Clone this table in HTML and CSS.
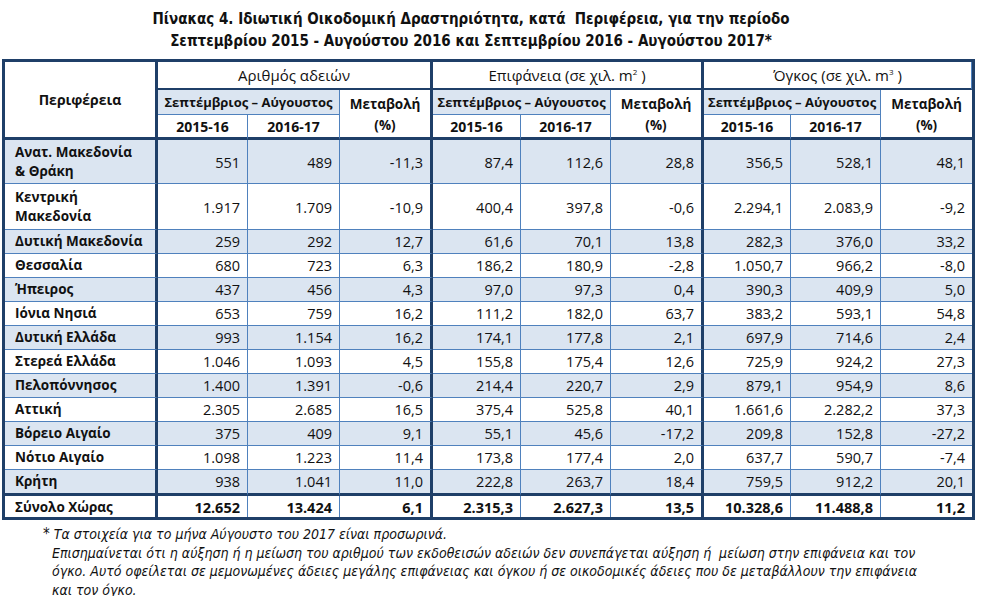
FILE: index.html
```html
<!DOCTYPE html>
<html lang="el">
<head>
    <meta charset="UTF-8">
    <title>Πίνακας 4. Ιδιωτική Οικοδομική Δραστηριότητα</title>
    <link rel="stylesheet" href="styles.css">
</head>
<body>
    <h1 class="title">
        Πίνακας 4. Ιδιωτική Οικοδομική Δραστηριότητα, κατά&nbsp; Περιφέρεια, για την περίοδο<br>
        Σεπτεμβρίου 2015 - Αυγούστου 2016 και Σεπτεμβρίου 2016 - Αυγούστου 2017*
    </h1>

    <table class="stats">
        <colgroup>
            <col class="c-region">
            <col class="c-num"><col class="c-num2"><col class="c-chg">
            <col class="c-num3"><col class="c-num"><col class="c-chg">
            <col class="c-num4"><col class="c-num"><col class="c-last">
        </colgroup>
        <thead>
            <tr class="h1">
                <th rowspan="3" class="region sep-r bottom">Περιφέρεια</th>
                <th colspan="3" class="group sep-r">Αριθμός αδειών</th>
                <th colspan="3" class="group sep-r">Επιφάνεια (σε χιλ. m<sup>2</sup> )</th>
                <th colspan="3" class="group">Όγκος (σε χιλ. m<sup>3</sup> )</th>
            </tr>
            <tr class="h2">
                <th colspan="2" class="period">Σεπτέμβριος – Αύγουστος</th>
                <th rowspan="2" class="chg sep-r bottom">Μεταβολή<br>(%)</th>
                <th colspan="2" class="period">Σεπτέμβριος – Αύγουστος</th>
                <th rowspan="2" class="chg sep-r bottom">Μεταβολή<br>(%)</th>
                <th colspan="2" class="period">Σεπτέμβριος – Αύγουστος</th>
                <th rowspan="2" class="chg last bottom">Μεταβολή<br>(%)</th>
            </tr>
            <tr class="h3">
                <th class="year bottom">2015-16</th><th class="year bottom">2016-17</th>
                <th class="year bottom">2015-16</th><th class="year bottom">2016-17</th>
                <th class="year bottom">2015-16</th><th class="year bottom">2016-17</th>
            </tr>
        </thead>
        <tbody>
            <tr class="shade tall">
                <td class="region sep-r">Ανατ. Μακεδονία<br>&amp; Θράκη</td>
                <td>551</td><td>489</td><td class="sep-r">-11,3</td>
                <td>87,4</td><td>112,6</td><td class="sep-r">28,8</td>
                <td>356,5</td><td>528,1</td><td class="last">48,1</td>
            </tr>
            <tr class="tall taller">
                <td class="region sep-r">Κεντρική<br>Μακεδονία</td>
                <td>1.917</td><td>1.709</td><td class="sep-r">-10,9</td>
                <td>400,4</td><td>397,8</td><td class="sep-r">-0,6</td>
                <td>2.294,1</td><td>2.083,9</td><td class="last">-9,2</td>
            </tr>
            <tr class="shade">
                <td class="region sep-r">Δυτική Μακεδονία</td>
                <td>259</td><td>292</td><td class="sep-r">12,7</td>
                <td>61,6</td><td>70,1</td><td class="sep-r">13,8</td>
                <td>282,3</td><td>376,0</td><td class="last">33,2</td>
            </tr>
            <tr>
                <td class="region sep-r">Θεσσαλία</td>
                <td>680</td><td>723</td><td class="sep-r">6,3</td>
                <td>186,2</td><td>180,9</td><td class="sep-r">-2,8</td>
                <td>1.050,7</td><td>966,2</td><td class="last">-8,0</td>
            </tr>
            <tr class="shade">
                <td class="region sep-r">Ήπειρος</td>
                <td>437</td><td>456</td><td class="sep-r">4,3</td>
                <td>97,0</td><td>97,3</td><td class="sep-r">0,4</td>
                <td>390,3</td><td>409,9</td><td class="last">5,0</td>
            </tr>
            <tr>
                <td class="region sep-r">Ιόνια Νησιά</td>
                <td>653</td><td>759</td><td class="sep-r">16,2</td>
                <td>111,2</td><td>182,0</td><td class="sep-r">63,7</td>
                <td>383,2</td><td>593,1</td><td class="last">54,8</td>
            </tr>
            <tr class="shade">
                <td class="region sep-r">Δυτική Ελλάδα</td>
                <td>993</td><td>1.154</td><td class="sep-r">16,2</td>
                <td>174,1</td><td>177,8</td><td class="sep-r">2,1</td>
                <td>697,9</td><td>714,6</td><td class="last">2,4</td>
            </tr>
            <tr>
                <td class="region sep-r">Στερεά Ελλάδα</td>
                <td>1.046</td><td>1.093</td><td class="sep-r">4,5</td>
                <td>155,8</td><td>175,4</td><td class="sep-r">12,6</td>
                <td>725,9</td><td>924,2</td><td class="last">27,3</td>
            </tr>
            <tr class="shade">
                <td class="region sep-r">Πελοπόννησος</td>
                <td>1.400</td><td>1.391</td><td class="sep-r">-0,6</td>
                <td>214,4</td><td>220,7</td><td class="sep-r">2,9</td>
                <td>879,1</td><td>954,9</td><td class="last">8,6</td>
            </tr>
            <tr>
                <td class="region sep-r">Αττική</td>
                <td>2.305</td><td>2.685</td><td class="sep-r">16,5</td>
                <td>375,4</td><td>525,8</td><td class="sep-r">40,1</td>
                <td>1.661,6</td><td>2.282,2</td><td class="last">37,3</td>
            </tr>
            <tr class="shade">
                <td class="region sep-r">Βόρειο Αιγαίο</td>
                <td>375</td><td>409</td><td class="sep-r">9,1</td>
                <td>55,1</td><td>45,6</td><td class="sep-r">-17,2</td>
                <td>209,8</td><td>152,8</td><td class="last">-27,2</td>
            </tr>
            <tr>
                <td class="region sep-r">Νότιο Αιγαίο</td>
                <td>1.098</td><td>1.223</td><td class="sep-r">11,4</td>
                <td>173,8</td><td>177,4</td><td class="sep-r">2,0</td>
                <td>637,7</td><td>590,7</td><td class="last">-7,4</td>
            </tr>
            <tr class="shade before-total">
                <td class="region sep-r">Κρήτη</td>
                <td>938</td><td>1.041</td><td class="sep-r">11,0</td>
                <td>222,8</td><td>263,7</td><td class="sep-r">18,4</td>
                <td>759,5</td><td>912,2</td><td class="last">20,1</td>
            </tr>
            <tr class="total">
                <td class="region sep-r">Σύνολο Χώρας</td>
                <td>12.652</td><td>13.424</td><td class="sep-r">6,1</td>
                <td>2.315,3</td><td>2.627,3</td><td class="sep-r">13,5</td>
                <td>10.328,6</td><td>11.488,8</td><td class="last">11,2</td>
            </tr>
        </tbody>
    </table>

    <div class="notes">
        <p class="first"><span class="star">*</span> Τα στοιχεία για το μήνα Αύγουστο του 2017 είναι προσωρινά.</p>
        <p>Επισημαίνεται ότι η αύξηση ή η μείωση του αριθμού των εκδοθεισών αδειών δεν συνεπάγεται αύξηση ή&nbsp; μείωση στην επιφάνεια και τον<br>
        όγκο. Αυτό οφείλεται σε μεμονωμένες άδειες μεγάλης επιφάνειας και όγκου ή σε οικοδομικές άδειες που δε μεταβάλλουν την επιφάνεια<br>
        και τον όγκο.</p>
    </div>
</body>
</html>
```

FILE: styles.css
```css
body {
    margin: 0;
    padding: 0 0 0 2px;
    background: #fff;
    color: #111;
    font-family: "Open Sans", "Liberation Sans", sans-serif;
}
.title {
    margin: 0;
    padding: 8px 42px 0 0;
    height: 52px;
    box-sizing: border-box;
    text-align: center;
    font-family: "Liberation Sans Narrow", "DejaVu Sans Condensed", sans-serif;
    font-weight: bold;
    font-size: 15px;
    line-height: 22px;
    color: #111;
}
.stats {
    width: 972px;
    margin-top: 7px;
    table-layout: fixed;
    border-collapse: separate;
    border-spacing: 0;
    border: 3px solid #1f3f68;
    font-size: 14.5px;
    color: #111;
}
.c-region { width: 153px; }
.c-num { width: 90px; }
.c-num2 { width: 92px; }
.c-num3 { width: 88px; }
.c-num4 { width: 87px; }
.c-chg { width: 93px; }
.c-last { width: 91px; }

.stats th,
.stats td {
    padding: 2px 7px 2px 6px;
    line-height: 19px;
    border-right: 1px solid #4f81bd;
    border-bottom: 1px solid #4f81bd;
    white-space: nowrap;
    overflow: hidden;
}
.stats td {
    text-align: right;
    height: 19px;
}
.stats th {
    text-align: center;
    font-weight: bold;
    padding: 0 2px;
}
.stats .sep-r {
    border-right: 3px solid #1f3f68;
}
.stats .last {
    border-right: none;
}
.stats .bottom {
    border-bottom: 3px solid #1f3f68;
}
.stats .region {
    text-align: left;
    font-weight: bold;
    font-size: 13.5px;
    padding-left: 10px;
}
.stats th.region {
    text-align: center;
    font-size: 14px;
    padding-left: 2px;
}
.h1 th {
    height: 26px;
    border-bottom: 2px solid #1f3f68;
}
.h1 th.group {
    font-weight: normal;
    font-size: 15px;
}
.h1 th.region {
    border-bottom: 3px solid #1f3f68;
}
.h1 sup {
    font-size: 8px;
    vertical-align: 6px;
    line-height: 0;
}
.h2 th {
    height: 24px;
}
.h2 th.period {
    background: #dbe5f1;
    font-size: 13px;
}
.h2 th.chg {
    font-size: 13.5px;
    line-height: 21px;
    padding-top: 2px;
}
.h3 th {
    height: 22px;
    font-size: 14px;
}
.shade td {
    background: #dbe5f1;
}
.tall td {
    height: 38px;
    padding-top: 3px;
}
.taller td {
    padding-top: 4px;
    padding-bottom: 3px;
}
.before-total td {
    border-bottom: 3px solid #1f3f68;
}
.total td {
    font-weight: bold;
    height: 19px;
    padding-top: 2px;
    padding-bottom: 0;
    border-bottom: none;
}
.notes {
    margin-top: 5px;
    font-family: "Liberation Sans Narrow", "DejaVu Sans Condensed", sans-serif;
    font-style: italic;
    font-size: 14px;
    line-height: 18.5px;
    color: #111;
    white-space: nowrap;
}
.notes p {
    margin: 0 0 0 50px;
}
.notes p.first {
    margin-left: 41px;
}
.notes .star {
    font-size: 15px;
}
```
